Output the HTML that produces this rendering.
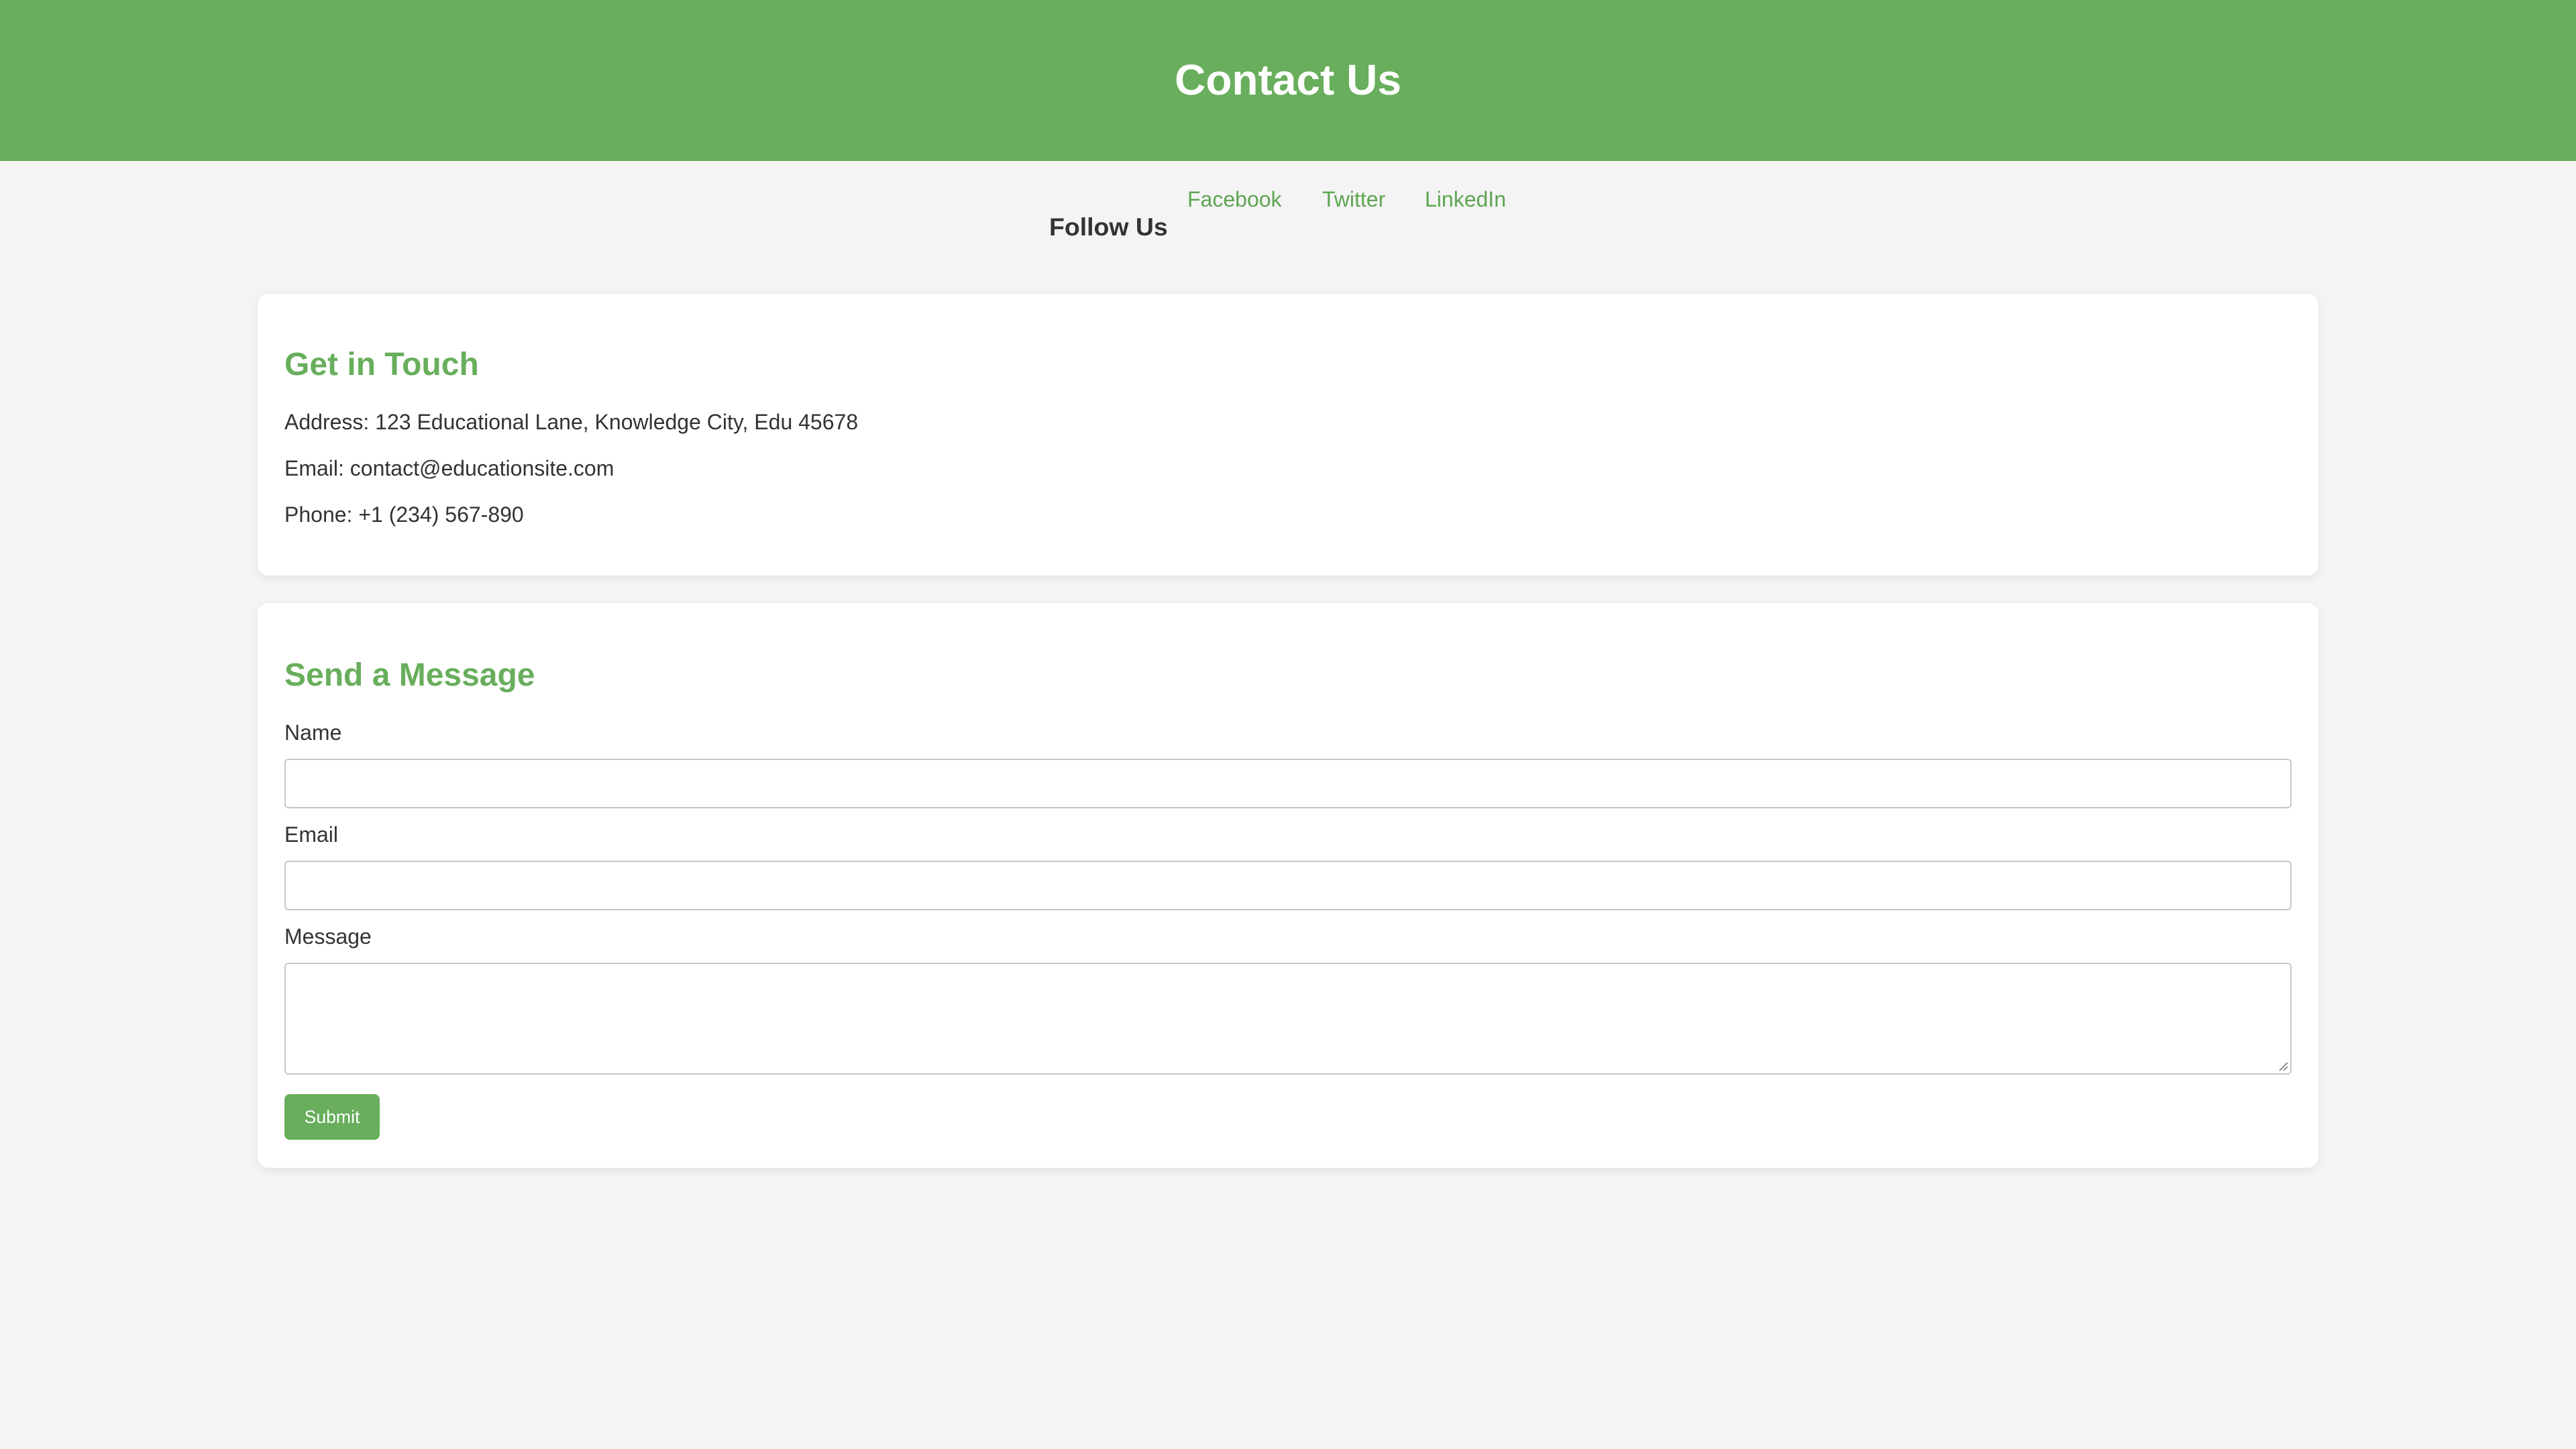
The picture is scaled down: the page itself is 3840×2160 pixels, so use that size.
<!DOCTYPE html>
<html><head><meta charset="utf-8"><style>
html,body{margin:0;padding:0;background:#f4f4f4;}
body{zoom:2;width:1920px;height:1080px;position:relative;overflow:hidden;font-family:"Liberation Sans",Arial,sans-serif;color:#333;}
.abs{position:absolute;white-space:nowrap;}
header{position:absolute;left:0;top:0;width:1920px;height:120px;background:#68ae5c;}
header h1{margin:0;position:absolute;left:0;width:1920px;text-align:center;top:41px;font-size:32px;line-height:37px;color:#fff;font-weight:bold;}
.follow{font-size:18.72px;font-weight:bold;line-height:22px;top:158px;left:782px;color:#333;}
.link{font-size:16px;color:#5ea552;line-height:18px;top:139.5px;}
.card{position:absolute;left:192px;width:1536px;background:#fff;border-radius:8px;box-shadow:0 2px 6px rgba(0,0,0,0.08);}
.h2{font-size:24px;font-weight:bold;color:#68ae5c;line-height:28px;left:212px;}
.p{font-size:16px;line-height:18px;left:212px;}
.inp{position:absolute;left:212px;width:1496px;border:1px solid #c8c8c8;border-radius:3px;background:#fff;box-sizing:border-box;}
.btn{position:absolute;left:212px;top:815.5px;width:71px;height:34px;background:#68ae5c;border-radius:4px;color:#fff;font-size:13.3px;line-height:34px;text-align:center;}
.grip{position:absolute;right:1px;bottom:1px;width:8px;height:8px;}
</style></head><body>
<header><h1>Contact Us</h1></header>
<div class="abs follow">Follow Us</div>
<div class="abs link" style="left:885px">Facebook</div>
<div class="abs link" style="left:985.5px">Twitter</div>
<div class="abs link" style="left:1062px">LinkedIn</div>

<div class="card" style="top:219px;height:210px"></div>
<div class="abs h2" style="top:258px">Get in Touch</div>
<div class="abs p" style="top:305.5px">Address: 123 Educational Lane, Knowledge City, Edu 45678</div>
<div class="abs p" style="top:340px">Email: contact@educationsite.com</div>
<div class="abs p" style="top:374.5px">Phone: +1 (234) 567-890</div>

<div class="card" style="top:449.5px;height:421px"></div>
<div class="abs h2" style="top:489.5px">Send a Message</div>
<div class="abs p" style="top:537px">Name</div>
<div class="inp" style="top:565.5px;height:37px"></div>
<div class="abs p" style="top:613px">Email</div>
<div class="inp" style="top:641.5px;height:37px"></div>
<div class="abs p" style="top:689px">Message</div>
<div class="inp" style="top:717.5px;height:83.5px"><svg class="grip" viewBox="0 0 8 8"><path d="M1 7L7 1M4 7L7 4" stroke="#666" stroke-width="0.7"/></svg></div>
<div class="btn">Submit</div>
</body></html>
